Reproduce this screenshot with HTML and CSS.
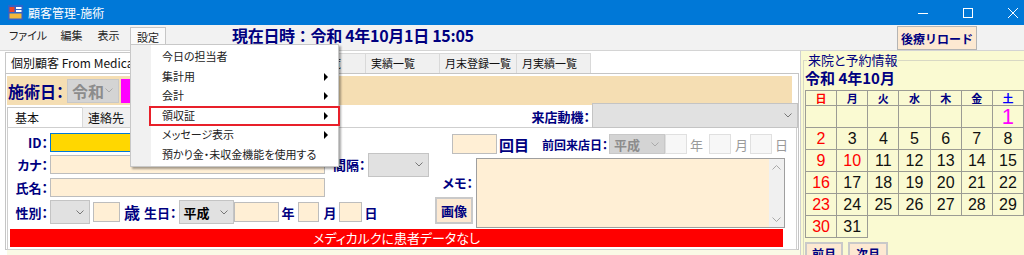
FILE: index.html
```html
<!DOCTYPE html>
<html lang="ja">
<head>
  <meta charset="UTF-8">
  <title>顧客管理-施術</title>
  <link rel="stylesheet" href="styles.css">
</head>
<body>
<div class="window">
  <div class="titlebar">
    <svg class="app-icon" viewBox="0 0 15 15" width="15" height="15">
      <rect x="0" y="0" width="15" height="15" fill="#2f63c9"/>
      <rect x="1.5" y="2" width="5" height="5" fill="#e8452c"/>
      <rect x="8" y="2" width="5.5" height="2" fill="#fff"/>
      <rect x="8" y="5" width="5.5" height="2" fill="#fff"/>
      <rect x="1.5" y="8.5" width="12" height="5" fill="#f3b93b"/>
    </svg>
    <span class="title">顧客管理-施術</span>
    <div class="win-controls">
      <span class="win-btn"><svg width="10" height="10" viewBox="0 0 10 10"><rect x="0" y="5" width="10" height="1" fill="#ffffff"/></svg></span>
      <span class="win-btn"><svg width="10" height="10" viewBox="0 0 10 10"><rect x="0.5" y="0.5" width="9" height="9" fill="none" stroke="#fff"/></svg></span>
      <span class="win-btn"><svg width="10" height="10" viewBox="0 0 10 10"><path d="M0 0L10 10M10 0L0 10" stroke="#fff"/></svg></span>
    </div>
  </div>

  <div class="menubar">
    <span class="menu-item m-file">ファイル</span>
    <span class="menu-item m-edit">編集</span>
    <span class="menu-item m-view">表示</span>
    <span class="menu-item m-set open">設定</span>
    <span class="clock">現在日時：令和 4年10月1日 15:05</span>
    <button class="reload">後療リロード</button>
  </div>

  <div class="main">
    <div class="left">
      <div class="tabs">
        <span class="tab active first">個別顧客 From Medicalc</span>
        <span class="tab">予約一覧</span>
        <span class="tab">来院一覧</span>
        <span class="tab">実績一覧</span>
        <span class="tab">月末登録一覧</span>
        <span class="tab">月実績一覧</span>
      </div>

      <div class="tabpage">
        <div class="date-band">
          <span class="band-label">施術日：</span>
          <div class="combo era disabled">令和<svg class="chev" width="8" height="5"><polyline points="0.5,0.5 4,4 7.5,0.5" fill="none" stroke="#aaa"/></svg></div>
          <div class="today-box"></div>
        </div>

        <div class="subtab-row">
          <span class="subtab active">基本</span>
          <span class="subtab">連絡先</span>
          <span class="label visit-label">来店動機：</span>
          <div class="combo visit"><svg class="chev" width="8" height="5"><polyline points="0.5,0.5 4,4 7.5,0.5" fill="none" stroke="#777"/></svg></div>
        </div>

        <div class="subpage">
          <div class="form-left">
            <div class="frow r1">
              <span class="label flabel">ID：</span>
              <div class="field id-field"></div>
            </div>
            <div class="frow r2">
              <span class="label flabel">カナ：</span>
              <div class="field wide"></div>
              <span class="label gap-label">間隔：</span>
              <div class="combo interval"><svg class="chev" width="8" height="5"><polyline points="0.5,0.5 4,4 7.5,0.5" fill="none" stroke="#777"/></svg></div>
            </div>
            <div class="frow r3">
              <span class="label flabel">氏名：</span>
              <div class="field wide"></div>
            </div>
            <div class="frow r4">
              <span class="label flabel">性別：</span>
              <div class="combo sex"><svg class="chev" width="8" height="5"><polyline points="0.5,0.5 4,4 7.5,0.5" fill="none" stroke="#777"/></svg></div>
              <div class="field age"></div>
              <span class="label big sai">歳</span>
              <span class="label birth-label">生日：</span>
              <div class="combo birth-era"><b>平成</b><svg class="chev" width="8" height="5"><polyline points="0.5,0.5 4,4 7.5,0.5" fill="none" stroke="#777"/></svg></div>
              <div class="field year"></div>
              <span class="label unit u-year">年</span>
              <div class="field small f-month"></div>
              <span class="label unit u-month">月</span>
              <div class="field small f-day"></div>
              <span class="label unit u-day">日</span>
            </div>
          </div>

          <div class="form-right">
            <div class="frow rr1">
              <div class="field count"></div>
              <span class="label big times">回目</span>
              <span class="label last-label">前回来店日：</span>
              <div class="combo last-era disabled">平成<svg class="chev" width="8" height="5"><polyline points="0.5,0.5 4,4 7.5,0.5" fill="none" stroke="#aaa"/></svg></div>
              <div class="field off l-year"></div>
              <span class="unit-off uo-year">年</span>
              <div class="field off l-month"></div>
              <span class="unit-off uo-month">月</span>
              <div class="field off l-day"></div>
              <span class="unit-off uo-day">日</span>
            </div>
            <div class="memo-row">
              <div class="memo-side">
                <span class="label memo-label">メモ：</span>
                <button class="image-btn">画像</button>
              </div>
              <div class="memo">
                <div class="scrollbar">
                  <svg width="9" height="5"><polyline points="0.5,4.5 4.5,0.5 8.5,4.5" fill="none" stroke="#a8a8a8"/></svg>
                  <svg width="9" height="5"><polyline points="0.5,0.5 4.5,4.5 8.5,0.5" fill="none" stroke="#a8a8a8"/></svg>
                </div>
              </div>
            </div>
          </div>

          <div class="alert">メディカルクに患者データなし</div>
        </div>
      </div>
      <div class="bottom-strip"></div>
    </div>

    <div class="right">
      <fieldset class="visit-group">
        <legend>来院と予約情報</legend>
        <div class="era-month">令和 4年10月</div>
        <table class="calendar">
          <tr class="week">
            <th class="sun">日</th><th>月</th><th>火</th><th>水</th><th>木</th><th>金</th><th class="sat">土</th>
          </tr>
          <tr><td></td><td></td><td></td><td></td><td></td><td></td><td class="today">1</td></tr>
          <tr><td class="holiday">2</td><td>3</td><td>4</td><td>5</td><td>6</td><td>7</td><td>8</td></tr>
          <tr><td class="holiday">9</td><td class="holiday">10</td><td>11</td><td>12</td><td>13</td><td>14</td><td>15</td></tr>
          <tr><td class="holiday">16</td><td>17</td><td>18</td><td>19</td><td>20</td><td>21</td><td>22</td></tr>
          <tr><td class="holiday">23</td><td>24</td><td>25</td><td>26</td><td>27</td><td>28</td><td>29</td></tr>
          <tr><td class="holiday">30</td><td>31</td><td class="blank"></td><td class="blank"></td><td class="blank"></td><td class="blank"></td><td class="blank"></td></tr>
        </table>
        <div class="month-nav">
          <button class="nav-btn">前月</button>
          <button class="nav-btn next">次月</button>
        </div>
      </fieldset>
    </div>
  </div>

  <!-- open 設定 menu -->
  <div class="dropdown">
    <div class="dd-item">今日の担当者</div>
    <div class="dd-item sub">集計用</div>
    <div class="dd-item sub">会計</div>
    <div class="dd-item sub marked">領収証</div>
    <div class="dd-item sub">メッセージ表示</div>
    <div class="dd-item">預かり金・未収金機能を使用する</div>
  </div>
</div>
</body>
</html>
```

FILE: styles.css
```css
* {
  box-sizing: border-box;
}

body {
  margin: 0;
  width: 1024px;
  height: 255px;
  overflow: hidden;
  font-family: "Noto Sans CJK JP", sans-serif;
  font-feature-settings: "palt";
  font-size: 12px;
  color: #000;
  background: #f2f2f2;
}

.window {
  position: relative;
  height: 255px;
}

/* title bar */
.titlebar {
  height: 25px;
  background: #0078d7;
  color: #fff;
  display: flex;
  align-items: center;
  padding-left: 8px;
}

.app-icon {
  margin-right: 5px;
}

.title {
  font-size: 12px;
}

.win-controls {
  margin-left: auto;
  margin-right: -11px;
  display: flex;
}

.win-btn {
  width: 45px;
  height: 25px;
  display: flex;
  align-items: center;
  justify-content: center;
}

.win-btn svg {
  display: block;
}

/* menu bar */
.menubar {
  height: 20px;
  display: flex;
  align-items: center;
  padding-left: 6px;
  background: #f2f2f2;
}

.menu-item {
  height: 20px;
  line-height: 20px;
  text-align: center;
  font-size: 11px;
  color: #222;
  white-space: nowrap;
}

.m-file {
  width: 44px;
  margin-right: 4px;
}

.m-edit {
  width: 35px;
  margin-right: 3px;
}

.m-view {
  width: 33px;
  margin-right: 5px;
}

.m-set {
  width: 36px;
}

.menu-item.open {
  background: #fafafa;
  border: 1px solid #c6c6c6;
  border-bottom: none;
  line-height: 18px;
  margin-top: 2px;
  height: 18px;
}

.clock {
  margin-left: 66px;
  font-size: 16px;
  letter-spacing: -0.3px;
  font-weight: bold;
  color: #000080;
  font-feature-settings: normal;
}

.reload {
  position: relative;
  z-index: 2;
  align-self: flex-start;
  margin: 1px 47px 0 auto;
  width: 80px;
  height: 24px;
  padding: 0;
  background: #fde9d2;
  border: 1px solid #b4b4b4;
  font-family: inherit;
  font-size: 12px;
  font-weight: bold;
  color: #000080;
}

/* main area */
.main {
  display: flex;
  height: 210px;
}

.left {
  width: 800px;
  margin-top: 5px;
  padding: 2px 0 0 5px;
  background: #fff;
  border-top: 1px solid #d4d4d4;
}

.tabs {
  display: flex;
  height: 20px;
}

.tab {
  min-width: 75px;
  height: 20px;
  line-height: 19px;
  padding: 0 5px;
  background: #f0f0f0;
  border: 1px solid #d9d9d9;
  border-bottom: none;
  margin-left: -1px;
  font-size: 11px;
  color: #111;
  white-space: nowrap;
  overflow: hidden;
}

.tab.first {
  width: 213px;
  margin-left: 0;
  font-size: 12px;
}

.tab.active {
  background: #fff;
  height: 21px;
  margin-top: -1px;
  border-color: #c8c8c8;
}

.tabpage {
  width: 794px;
  height: 177px;
  border: 1px solid #c5c5c5;
  padding: 2px 1px 0 1px;
}

.date-band {
  height: 29px;
  margin-right: 5px;
  background: #f5deb3;
  display: flex;
  align-items: center;
  padding-left: 1px;
}

.band-label {
  font-size: 16px;
  font-weight: bold;
  color: #000080;
  white-space: nowrap;
  margin-right: 3px;
}

.combo {
  display: flex;
  align-items: center;
  justify-content: space-between;
  background: #e1e1e1;
  border: 1px solid #c4c4c4;
  padding: 0 5px 0 4px;
  font-size: 13px;
  color: #000;
  white-space: nowrap;
}

.combo .chev {
  margin-left: auto;
  flex: none;
}

.combo.disabled {
  background: #d4d4d4;
  border-color: #c8c8c8;
  color: #8c8c8c;
}

.combo.era {
  width: 52px;
  height: 24px;
  font-size: 16px;
  font-weight: bold;
}

.today-box {
  width: 30px;
  height: 24px;
  margin-left: 2px;
  background: #ff00ff;
}

/* sub tabs */
.subtab-row {
  display: flex;
  align-items: flex-start;
  height: 22px;
}

.subtab {
  height: 20px;
  margin-top: 2px;
  line-height: 19px;
  padding-left: 7px;
  font-size: 12px;
  border: 1px solid #d9d9d9;
  border-bottom: none;
  background: #f0f0f0;
  color: #111;
  white-space: nowrap;
}

.subtab.active {
  width: 76px;
  background: #fff;
  border-color: #c8c8c8;
}

.subtab:nth-child(2) {
  width: 50px;
  margin-left: -1px;
  padding-left: 5px;
}

.label {
  font-weight: bold;
  color: #000080;
  font-size: 13px;
  white-space: nowrap;
}

.visit-label {
  margin-left: auto;
  margin-top: 2px;
  line-height: 20px;
  margin-right: 2px;
}

.combo.visit {
  width: 206px;
  height: 25px;
  margin-top: -2px;
  margin-right: -1px;
}

.subpage {
  height: 123px;
  border: 1px solid #cfcfcf;
  display: grid;
  grid-template-columns: 422px 1fr;
  grid-template-rows: 100px 18px;
  row-gap: 1px;
}

/* left form */
.form-left {
  padding-top: 5px;
}

.frow {
  display: flex;
  align-items: center;
}

.r1 {
  height: 19px;
  margin-bottom: 3px;
}

.r2 {
  height: 19px;
  margin-bottom: 4px;
}

.r3 {
  height: 19px;
  margin-bottom: 3px;
}

.r4 {
  height: 24px;
}

.flabel {
  width: 40px;
  margin-right: 2px;
  text-align: right;
}

.field {
  height: 19px;
  background: #ffefd5;
  border: 1px solid #bdbdbd;
}

.field.wide {
  width: 275px;
}

.field.id-field {
  width: 275px;
  background: #ffd700;
  border-color: #0078d7;
}

.gap-label {
  margin-left: 8px;
  margin-right: 2px;
}

.combo.interval {
  width: 61px;
  height: 24px;
}

.combo.sex {
  width: 40px;
  height: 24px;
}

.field.age {
  width: 27px;
  height: 20px;
  margin-left: 3px;
}

.big {
  font-size: 16px;
}

.sai {
  margin-left: 4px;
}

.birth-label {
  margin-left: 4px;
  margin-right: 2px;
}

.combo.birth-era {
  width: 55px;
  height: 24px;
  font-size: 13px;
}

.field.year {
  width: 45px;
  height: 20px;
}

.unit {
  margin-left: 3px;
}

.field.small {
  height: 20px;
}

.f-month {
  width: 21px;
  margin-left: 3px;
}

.u-month {
  margin-left: 5px;
}

.f-day {
  width: 23px;
  margin-left: 2px;
}

/* right form */
.form-right {
  padding-top: 6px;
}

.rr1 {
  height: 20px;
  margin-bottom: 4px;
  padding-left: 22px;
}

.field.count {
  width: 45px;
  height: 20px;
}

.times {
  margin-left: 2px;
  font-size: 15px;
}

.last-label {
  font-size: 12px;
  margin-left: 13px;
  margin-right: 1px;
}

.combo.last-era {
  width: 56px;
  height: 20px;
  font-size: 13px;
  font-weight: bold;
}

.field.off {
  height: 20px;
  background: #f7f7f7;
  border-color: #e0e0e0;
}

.l-year {
  width: 22px;
}

.l-month {
  width: 22px;
  margin-left: 3px;
}

.l-day {
  width: 22px;
  margin-left: 2px;
}

.unit-off {
  color: #9a9a9a;
  font-size: 13px;
}

.uo-year {
  margin-left: 3px;
  margin-right: 3px;
}

.uo-month {
  margin-left: 4px;
}

.uo-day {
  margin-left: 3px;
}

.memo-row {
  display: flex;
  height: 70px;
}

.memo-side {
  width: 46px;
  padding-left: 5px;
  display: flex;
  flex-direction: column;
  align-items: flex-end;
}

.memo-label {
  margin-top: 17px;
  line-height: 16px;
  padding-right: 3px;
}

.image-btn {
  margin-top: 6px;
  margin-right: 3px;
  width: 38px;
  height: 27px;
  padding: 0;
  background: #fde9d2;
  border: 2px solid #c9c9c9;
  font-family: inherit;
  font-size: 13px;
  font-weight: bold;
  color: #000080;
}

.memo {
  width: 309px;
  height: 70px;
  background: #ffefd5;
  border: 1px solid #9f9f9f;
  display: flex;
  justify-content: flex-end;
}

.scrollbar {
  width: 15px;
  background: #f0f0f0;
  display: flex;
  flex-direction: column;
  justify-content: space-between;
  align-items: center;
  padding: 6px 0 5px;
}

.alert {
  grid-column: 1 / 3;
  margin: 0 13px 0 2px;
  background: #ff0000;
  color: #fff;
  font-size: 13px;
  line-height: 18px;
  text-align: center;
}

.bottom-strip {
  height: 5px;
  margin-left: 2px;
  background: #fafae6;
}

/* right panel: calendar */
.right {
  flex: 1;
  margin-top: 5px;
  padding: 2px 0 0 2px;
  background: #fafad2;
  border-left: 1px solid #d0d0d0;
  border-top: 1px solid #d4d4d4;
}

.visit-group {
  margin: 0;
  padding: 0 0 0 1px;
  min-width: 0;
  border: 1px solid #d8d8c4;
  border-right: none;
  border-bottom: none;
}

.visit-group legend {
  padding: 0 1px;
  margin-left: 2px;
  font-size: 13px;
  line-height: 14px;
  color: #000080;
}

.era-month {
  margin-top: 2px;
  font-size: 15px;
  line-height: 18px;
  font-weight: bold;
  color: #000080;
}

.calendar {
  margin-top: 3px;
  width: 219px;
  border-collapse: collapse;
  table-layout: fixed;
}

.calendar th,
.calendar td {
  border: 1px solid #9c9c94;
  text-align: center;
  padding: 0;
}

.calendar th {
  height: 15px;
  font-size: 11px;
  line-height: 13px;
  font-weight: bold;
  color: #000080;
}

.calendar th.sun {
  color: #ff0000;
}

.calendar th.sat {
  color: #0000ff;
}

.calendar td {
  height: 22px;
  font-family: "Liberation Sans", Arial, sans-serif;
  font-size: 16px;
  line-height: 20px;
  color: #111;
}

.calendar td.holiday {
  color: #ff0000;
}

.calendar td.today {
  color: #ff00ff;
  font-size: 22px;
}

.calendar td.blank {
  border: none;
}

.month-nav {
  display: flex;
  margin-top: 4px;
}

.nav-btn {
  width: 38px;
  height: 22px;
  padding: 0;
  background: #fde9d2;
  border: 2px solid #c9c9c9;
  font-family: inherit;
  font-size: 12px;
  font-weight: bold;
  color: #000080;
}

.nav-btn.next {
  width: 40px;
  margin-left: 5px;
}

/* dropdown of 設定 */
.dropdown {
  position: absolute;
  left: 130px;
  top: 44px;
  width: 209px;
  padding: 2px 0;
  background: linear-gradient(to right, #f1f1f1 20px, #fff 20px);
  border: 1px solid #c8c8c8;
  box-shadow: 2px 2px 2px rgba(0, 0, 0, 0.35);
  z-index: 5;
}

.dd-item {
  position: relative;
  height: 19.5px;
  line-height: 19.5px;
  padding-left: 31px;
  font-size: 11px;
  color: #222;
  white-space: nowrap;
}

.dd-item.sub::before {
  content: "";
  position: absolute;
  right: 10px;
  top: 6px;
  border-left: 4px solid #000;
  border-top: 4px solid transparent;
  border-bottom: 4px solid transparent;
}

.dd-item.marked::after {
  content: "";
  position: absolute;
  left: 18px;
  right: -2px;
  top: 0;
  bottom: -1px;
  border: 2px solid #e8202a;
}
```
